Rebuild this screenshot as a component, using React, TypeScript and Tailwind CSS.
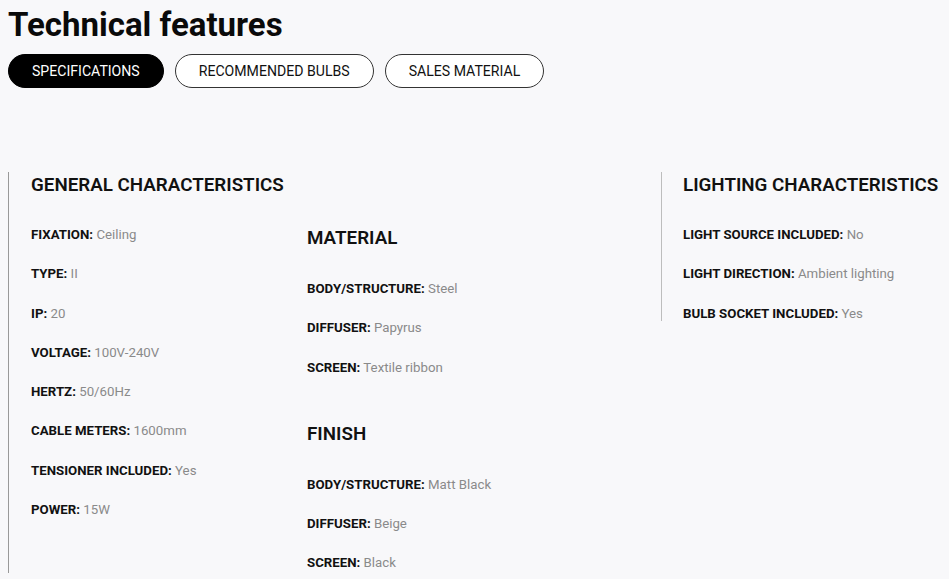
const general: [string, string][] = [
  ['FIXATION', 'Ceiling'],
  ['TYPE', 'II'],
  ['IP', '20'],
  ['VOLTAGE', '100V-240V'],
  ['HERTZ', '50/60Hz'],
  ['CABLE METERS', '1600mm'],
  ['TENSIONER INCLUDED', 'Yes'],
  ['POWER', '15W'],
]

const material: [string, string][] = [
  ['BODY/STRUCTURE', 'Steel'],
  ['DIFFUSER', 'Papyrus'],
  ['SCREEN', 'Textile ribbon'],
]

const finish: [string, string][] = [
  ['BODY/STRUCTURE', 'Matt Black'],
  ['DIFFUSER', 'Beige'],
  ['SCREEN', 'Black'],
]

const lighting: [string, string][] = [
  ['LIGHT SOURCE INCLUDED', 'No'],
  ['LIGHT DIRECTION', 'Ambient lighting'],
  ['BULB SOCKET INCLUDED', 'Yes'],
]

function Heading({ children }: { children: React.ReactNode }) {
  return (
    <h3 className="whitespace-nowrap text-[18.8px] font-semibold leading-[26px] text-[#111]">
      {children}
    </h3>
  )
}

function Items({ rows, className = 'mt-[27px]' }: { rows: [string, string][]; className?: string }) {
  return (
    <ul className={'flex flex-col gap-[19.3px] ' + className}>
      {rows.map(([label, value]) => (
        <li key={label} className="whitespace-nowrap text-[13.25px] leading-[20px]">
          <span className="font-bold text-[#111]">{label}:</span>{' '}
          <span className="text-[#8a8a8a]">{value}</span>
        </li>
      ))}
    </ul>
  )
}

export default function App() {
  const tabs = ['SPECIFICATIONS', 'RECOMMENDED BULBS', 'SALES MATERIAL']

  return (
    <div
      className="min-h-screen overflow-hidden bg-[#f8f8fa] px-2"
      style={{ fontFamily: 'Roboto, "Liberation Sans", sans-serif' }}
    >
      <h1 className="pt-[5px] text-[33px] font-bold leading-[40px] text-[#0a0a0a]">
        Technical features
      </h1>

      <div className="mt-[9px] flex gap-[11px]">
        {tabs.map((tab, i) => (
          <button
            key={tab}
            className={
              i === 0
                ? 'h-[34px] rounded-full border border-black bg-black px-[23px] pt-[1px] text-[14.1px] text-white'
                : 'h-[34px] rounded-full border border-[#333] bg-white px-[23px] pt-[1px] text-[14.1px] text-[#111]'
            }
          >
            {tab}
          </button>
        ))}
      </div>

      <div className="mt-[84px] flex">
        {/* linke Spalten */}
        <div className="flex w-[653px] border-l border-[#999] pl-[22px]">
          <div className="w-[276px]">
            <Heading>GENERAL CHARACTERISTICS</Heading>
            <Items rows={general} />
          </div>
          <div className="pt-[53px]">
            <Heading>MATERIAL</Heading>
            <Items rows={material} className="mt-[28px]" />
            <div className="mt-[43px]">
              <Heading>FINISH</Heading>
              <Items rows={finish} className="mt-[28px]" />
            </div>
          </div>
        </div>

        <div className="self-start border-l border-[#bdbdbd] pl-[21px]">
          <Heading>LIGHTING CHARACTERISTICS</Heading>
          <Items rows={lighting} className="mt-[27px] -mb-[3px]" />
        </div>
      </div>
    </div>
  )
}
